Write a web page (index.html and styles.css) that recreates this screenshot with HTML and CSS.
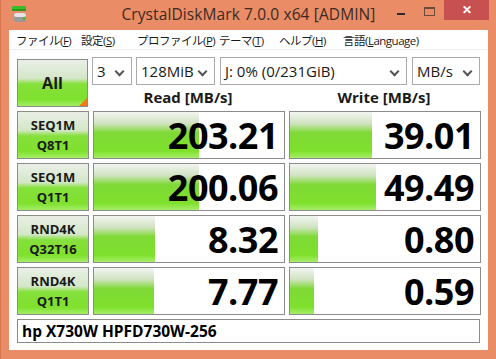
FILE: index.html
```html
<!DOCTYPE html>
<html lang="ja">
<head>
    <meta charset="UTF-8">
    <title>CrystalDiskMark 7.0.0 x64 [ADMIN]</title>
    <link rel="stylesheet" href="styles.css">
</head>
<body>
<div class="window">
    <div class="titlebar">
        <svg class="app-icon" width="20" height="20" viewBox="0 0 20 20">
            <rect x="2" y="2" width="14" height="5" rx="1" fill="#3dbb2a"/>
            <rect x="2" y="5" width="14" height="2" fill="#2a9a1f"/>
            <rect x="4" y="9" width="12" height="9" rx="2" fill="#9a9a9a"/>
            <rect x="4" y="9" width="12" height="4" rx="2" fill="#e4e4e4"/>
            <rect x="13" y="13" width="2" height="3" fill="#39c22c"/>
        </svg>
        <div class="title">CrystalDiskMark 7.0.0 x64 [ADMIN]</div>
        <div class="winbtns">
            <span class="wb-min"></span>
            <span class="wb-max"></span>
            <span class="wb-close">&#x2715;</span>
        </div>
    </div>

    <div class="client">
        <!-- メニュー -->
        <div class="menubar">
            <span class="m1">ファイル(<u>F</u>)</span>
            <span class="m2">設定(<u>S</u>)</span>
            <span class="m3">プロファイル(<u>P</u>)</span>
            <span class="m4">テーマ(<u>T</u>)</span>
            <span class="m5">ヘルプ(<u>H</u>)</span>
            <span class="m6">言語(<u>L</u>anguage)</span>
        </div>

        <div class="content">
            <div class="top">
                <div class="btn all">All<span class="corner"></span></div>
                <div class="top-right">
                    <div class="combos">
                        <div class="combo c-count">3<span class="chev"></span></div>
                        <div class="combo c-size">128MiB<span class="chev"></span></div>
                        <div class="combo c-drive">J: 0% (0/231GiB)<span class="chev"></span></div>
                        <div class="combo c-unit">MB/s<span class="chev"></span></div>
                    </div>
                    <div class="heads">
                        <div class="head">Read [MB/s]</div>
                        <div class="head">Write [MB/s]</div>
                    </div>
                </div>
            </div>

            <div class="results">
                <div class="btn label">SEQ1M<br>Q8T1</div>
                <div class="cell"><div class="bar" style="width:105px"></div><span class="val">203.21</span></div>
                <div class="cell"><div class="bar" style="width:82px"></div><span class="val">39.01</span></div>

                <div class="btn label">SEQ1M<br>Q1T1</div>
                <div class="cell"><div class="bar" style="width:105px"></div><span class="val">200.06</span></div>
                <div class="cell"><div class="bar" style="width:86px"></div><span class="val">49.49</span></div>

                <div class="btn label">RND4K<br>Q32T16</div>
                <div class="cell"><div class="bar" style="width:61px"></div><span class="val">8.32</span></div>
                <div class="cell"><div class="bar" style="width:28px"></div><span class="val">0.80</span></div>

                <div class="btn label">RND4K<br>Q1T1</div>
                <div class="cell"><div class="bar" style="width:60px"></div><span class="val">7.77</span></div>
                <div class="cell"><div class="bar" style="width:24px"></div><span class="val">0.59</span></div>
            </div>

            <div class="footer">hp X730W HPFD730W-256</div>
        </div>
    </div>
</div>
</body>
</html>
```

FILE: styles.css
```css
body {
    margin: 0;
    padding: 0;
    background-color: #ea8d66;
    font-family: "Open Sans", "Noto Sans", "Noto Sans CJK JP", sans-serif;
}

.window {
    width: 496px;
    height: 359px;
    box-sizing: border-box;
    padding: 0 8px 9px 8px;
    background-color: #ea8d66;
    border-left: 1px solid #d9774f;
}

/* タイトルバー */
.titlebar {
    height: 30px;
    display: flex;
    align-items: flex-start;
    position: relative;
}

.app-icon {
    margin: 4px 0 0 1px;
}

.title {
    position: absolute;
    left: 0;
    right: 0;
    top: 3px;
    text-align: center;
    font-size: 15.5px;
    color: #3a2a22;
    letter-spacing: 0.1px;
}

.winbtns {
    margin-left: auto;
    display: flex;
    align-items: flex-start;
    margin-right: -8px;
}

.wb-min {
    width: 8px;
    height: 2px;
    background-color: #2b2b2b;
    margin: 13px 19px 0 0;
}

.wb-max {
    width: 9px;
    height: 6px;
    border: 1px solid #6e4a3a;
    border-top-width: 2px;
    margin: 7px 9px 0 0;
}

.wb-close {
    width: 45px;
    height: 20px;
    background-color: #c75050;
    color: #ffffff;
    font-size: 12px;
    font-weight: bold;
    text-align: center;
    line-height: 20px;
    margin-right: 7px;
}

/* クライアント領域 */
.client {
    background-color: #ffffff;
    height: 320px;
}

.menubar {
    height: 20px;
    display: flex;
    align-items: center;
    font-size: 11.5px;
    color: #1a1a1a;
    padding-left: 7px;
    border-bottom: 1px solid #f0f0f0;
    box-sizing: border-box;
    white-space: nowrap;
}

.menubar span {
    font-family: "Open Sans", "Noto Sans CJK JP", sans-serif;
    letter-spacing: -0.5px;
    flex-shrink: 0;
}

.m1 { width: 65px; }
.m2 { width: 56px; }
.m3 { width: 82px; }
.m4 { width: 60px; }
.m5 { width: 64px; }

.content {
    padding: 7px 8px 0 8px;
}

.top {
    display: flex;
    gap: 4px;
}

.btn {
    box-sizing: border-box;
    border: 1px solid #8c8c8c;
    background: linear-gradient(to bottom, #e9efe6 0%, #d4e7c8 40%, #86e03c 52%, #7ee02c 85%, #a4ee66 100%);
    color: #1a1a1a;
    font-weight: bold;
    text-align: center;
    position: relative;
}

.all {
    width: 72px;
    height: 48px;
    margin-top: 2px;
    font-size: 16px;
    line-height: 46px;
}

.corner {
    position: absolute;
    right: 0;
    bottom: 0;
    width: 0;
    height: 0;
    border-left: 8px solid transparent;
    border-bottom: 8px solid #f07a16;
}

.top-right {
    flex: 1;
}

.combos {
    display: flex;
    height: 28px;
}

.combo {
    box-sizing: border-box;
    border: 1px solid #ababab;
    height: 28px;
    font-size: 15px;
    color: #1a1a1a;
    line-height: 26px;
    padding-left: 4px;
    position: relative;
    margin-right: 5px;
}

.c-count { width: 40px; margin-right: 4px; }
.c-size { width: 79px; }
.c-drive { width: 187px; }
.c-unit { width: 68px; margin-right: 0; }

.chev {
    position: absolute;
    right: 8px;
    top: 10px;
    width: 5px;
    height: 5px;
    border-right: 2px solid #555;
    border-bottom: 2px solid #555;
    transform: rotate(45deg);
}

.heads {
    display: flex;
    gap: 4px;
    height: 22px;
}

.head {
    width: 192px;
    text-align: center;
    font-size: 15px;
    font-weight: bold;
    color: #1a1a1a;
    line-height: 24px;
}

.results {
    display: grid;
    grid-template-columns: 72px 192px 192px;
    grid-auto-rows: 48px;
    gap: 4px;
    margin-top: 4px;
}

.label {
    font-size: 13px;
    line-height: 20px;
    padding-top: 3px;
}

.cell {
    box-sizing: border-box;
    border: 1px solid #8c8c8c;
    position: relative;
    display: flex;
    justify-content: flex-end;
    align-items: center;
    overflow: hidden;
}

.bar {
    position: absolute;
    left: 0;
    top: 0;
    bottom: 0;
    background: linear-gradient(to bottom, #f3f5f2 0%, #cfe3c0 25%, #7fd936 45%, #7ee02c 85%, #a6ee6a 100%);
}

.val {
    position: relative;
    font-size: 36px;
    font-weight: bold;
    color: #000000;
    padding-right: 6px;
    letter-spacing: -0.5px;
}

.footer {
    box-sizing: border-box;
    margin-top: 4px;
    height: 24px;
    border: 1px solid #8c8c8c;
    font-size: 15.5px;
    font-weight: bold;
    color: #000;
    line-height: 22px;
    padding-left: 4px;
}
```
